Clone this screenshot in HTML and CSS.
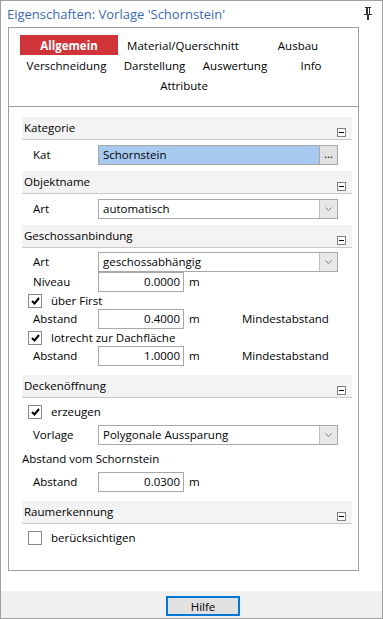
FILE: index.html
```html
<!DOCTYPE html>
<html lang="de">
<head>
    <meta charset="UTF-8">
    <title>Eigenschaften: Vorlage 'Schornstein'</title>
    <link rel="stylesheet" href="styles.css">
</head>
<body>
    <div class="window">
        <div class="titlebar">
            <span class="title">Eigenschaften: Vorlage 'Schornstein'</span>
            <svg class="pin" width="8" height="14" viewBox="0 0 8 14">
                <rect x="1" y="1" width="6" height="1" fill="#333"/>
                <rect x="2" y="2" width="1" height="6" fill="#333"/>
                <rect x="5" y="2" width="1" height="6" fill="#333"/>
                <rect x="3" y="2" width="1" height="6" fill="#333"/>
                <rect x="0" y="8" width="8" height="1" fill="#333"/>
                <rect x="3" y="9" width="2" height="5" fill="#333"/>
            </svg>
        </div>

        <div class="panel">
            <!-- Register -->
            <div class="tabs">
                <div class="tab-row">
                    <span class="tab active w98">Allgemein</span>
                    <span class="tab w130">Material/Querschnitt</span>
                    <span class="tab w100">Ausbau</span>
                </div>
                <div class="tab-row">
                    <span class="tab w93">Verschneidung</span>
                    <span class="tab w83">Darstellung</span>
                    <span class="tab w78">Auswertung</span>
                    <span class="tab w74">Info</span>
                </div>
                <div class="tab-row">
                    <span class="tab wfull">Attribute</span>
                </div>
            </div>

            <div class="content">
                <div class="section">
                    <div class="sec-head">Kategorie <span class="collapse"></span></div>
                    <div class="sec-body">
                        <div class="row">
                            <span class="lbl">Kat</span>
                            <div class="field picker">
                                <span class="value">Schornstein</span>
                                <span class="dots">...</span>
                            </div>
                        </div>
                    </div>
                </div>

                <div class="section">
                    <div class="sec-head">Objektname <span class="collapse"></span></div>
                    <div class="sec-body">
                        <div class="row">
                            <span class="lbl">Art</span>
                            <div class="field combo">
                                <span class="value">automatisch</span>
                                <span class="arrow"><svg width="7" height="4" viewBox="0 0 7 4"><polyline points="0.5,0.5 3.5,3.5 6.5,0.5" fill="none" stroke="#777" stroke-width="1"/></svg></span>
                            </div>
                        </div>
                    </div>
                </div>

                <div class="section">
                    <div class="sec-head">Geschossanbindung <span class="collapse"></span></div>
                    <div class="sec-body geschoss">
                        <div class="row">
                            <span class="lbl">Art</span>
                            <div class="field combo">
                                <span class="value">geschossabhängig</span>
                                <span class="arrow"><svg width="7" height="4" viewBox="0 0 7 4"><polyline points="0.5,0.5 3.5,3.5 6.5,0.5" fill="none" stroke="#777" stroke-width="1"/></svg></span>
                            </div>
                        </div>
                        <div class="row">
                            <span class="lbl">Niveau</span>
                            <div class="field num">0.0000</div>
                            <span class="unit">m</span>
                        </div>
                        <div class="check-row">
                            <span class="box checked"><svg width="9" height="8" viewBox="0 0 9 8"><polyline points="1,4 3.5,6.5 8,1" fill="none" stroke="#000" stroke-width="2"/></svg></span>
                            <span>über First</span>
                        </div>
                        <div class="row">
                            <span class="lbl">Abstand</span>
                            <div class="field num">0.4000</div>
                            <span class="unit">m</span>
                            <span class="note">Mindestabstand</span>
                        </div>
                        <div class="check-row">
                            <span class="box checked"><svg width="9" height="8" viewBox="0 0 9 8"><polyline points="1,4 3.5,6.5 8,1" fill="none" stroke="#000" stroke-width="2"/></svg></span>
                            <span>lotrecht zur Dachfläche</span>
                        </div>
                        <div class="row">
                            <span class="lbl">Abstand</span>
                            <div class="field num">1.0000</div>
                            <span class="unit">m</span>
                            <span class="note">Mindestabstand</span>
                        </div>
                    </div>
                </div>

                <div class="section">
                    <div class="sec-head">Deckenöffnung <span class="collapse"></span></div>
                    <div class="sec-body decke">
                        <div class="check-row">
                            <span class="box checked"><svg width="9" height="8" viewBox="0 0 9 8"><polyline points="1,4 3.5,6.5 8,1" fill="none" stroke="#000" stroke-width="2"/></svg></span>
                            <span>erzeugen</span>
                        </div>
                        <div class="row gap5">
                            <span class="lbl">Vorlage</span>
                            <div class="field combo">
                                <span class="value">Polygonale Aussparung</span>
                                <span class="arrow"><svg width="7" height="4" viewBox="0 0 7 4"><polyline points="0.5,0.5 3.5,3.5 6.5,0.5" fill="none" stroke="#777" stroke-width="1"/></svg></span>
                            </div>
                        </div>
                        <div class="sub-title">Abstand vom Schornstein</div>
                        <div class="row gap3">
                            <span class="lbl">Abstand</span>
                            <div class="field num">0.0300</div>
                            <span class="unit">m</span>
                        </div>
                    </div>
                </div>

                <div class="section">
                    <div class="sec-head">Raumerkennung <span class="collapse"></span></div>
                    <div class="sec-body">
                        <div class="check-row">
                            <span class="box"></span>
                            <span>berücksichtigen</span>
                        </div>
                    </div>
                </div>
            </div>
        </div>

        <div class="footer">
            <button class="btn-help">Hilfe</button>
        </div>
    </div>
</body>
</html>
```

FILE: styles.css
```css
/* Grundlayout */
* {
    box-sizing: border-box;
}

body {
    margin: 0;
    font-family: "Open Sans", "Noto Sans", Arial, sans-serif;
    font-size: 11.5px;
    color: #000;
    background: #fff;
}

.window {
    width: 383px;
    height: 619px;
    border: 1px solid #a0a0a0;
    background: #fff;
}

/* Titelzeile */
.titlebar {
    height: 26px;
    display: flex;
    align-items: center;
    padding-left: 6px;
}

.title {
    color: #3c6bb0;
    font-size: 13px;
    flex: 1;
    margin-top: -1px;
}

.pin {
    margin-right: 10px;
    margin-top: -2px;
}

/* Hauptbereich */
.panel {
    margin-left: 7px;
    width: 351px;
    height: 544px;
    border: 1px solid #a0a0a0;
}

/* Register */
.tabs {
    padding: 7px 0 11px 11px;
    border-bottom: 1px solid #a0a0a0;
}

.tab-row {
    display: flex;
    height: 20px;
}

.tab {
    display: flex;
    align-items: center;
    justify-content: center;
    height: 20px;
    white-space: nowrap;
}

.tab.active {
    background: #d13438;
    color: #fff;
    font-weight: bold;
}

.w98 { width: 98px; }
.w130 { width: 130px; }
.w100 { width: 100px; }
.w93 { width: 93px; }
.w83 { width: 83px; }
.w78 { width: 78px; }
.w74 { width: 74px; }
.wfull { width: 328px; }

/* Abschnitte */
.content {
    padding: 10px 6px 0 13px;
}

.sec-head {
    position: relative;
    height: 23px;
    background: #f3f3f3;
    border-bottom: 1px solid #c8c8c8;
    padding: 3px 0 0 2px;
}

.collapse {
    position: absolute;
    right: 6px;
    bottom: 2px;
    width: 9px;
    height: 9px;
    border: 1px solid #808080;
    background: #fff;
}

.collapse::after {
    content: "";
    position: absolute;
    left: 1px;
    top: 3px;
    width: 5px;
    height: 1px;
    background: #000;
}

.sec-body {
    padding: 5px 0 6px 11px;
}

.sec-body.geschoss {
    padding-top: 4px;
    padding-bottom: 9px;
}

.sec-body.decke {
    padding-bottom: 9px;
}

.row {
    display: flex;
    align-items: center;
    height: 20px;
    line-height: 18px;
}

.row.gap5 { margin-top: 5px; }
.row.gap3 { margin-top: 3px; }

.lbl {
    width: 65px;
    margin-top: -1px;
}

.field {
    height: 20px;
    border: 1px solid #a8a8a8;
    display: flex;
    align-items: center;
    background: #fff;
}

.field .value {
    flex: 1;
    padding-left: 4px;
    white-space: nowrap;
}

.picker {
    width: 240px;
}

.picker .value {
    background: #a8c9ef;
    height: 100%;
    display: flex;
    align-items: center;
}

.dots {
    width: 18px;
    height: 100%;
    border-left: 1px solid #a8a8a8;
    background: #e1e1e1;
    text-align: center;
    line-height: 16px;
}

.combo {
    width: 240px;
}

.arrow {
    width: 18px;
    height: 100%;
    border-left: 1px solid #c0c0c0;
    background: #e8e8e8;
    display: flex;
    align-items: center;
    justify-content: center;
}

.num {
    width: 86px;
    justify-content: flex-end;
    padding-right: 3px;
}

.unit {
    margin-left: 5px;
    width: 53px;
}

.check-row {
    display: flex;
    align-items: center;
    height: 17px;
    margin-left: -5px;
}

.box {
    width: 14px;
    height: 14px;
    border: 1px solid #8a8a8a;
    margin-right: 9px;
    display: flex;
    align-items: center;
    justify-content: center;
    background: #fff;
}

.sub-title {
    height: 20px;
    line-height: 20px;
    margin: 4px 0 0 -11px;
}

/* Fußzeile */
.footer {
    margin-top: 20px;
    height: 27px;
    background: #f0f0f0;
    padding: 5px 0 0 165px;
}

.btn-help {
    width: 74px;
    height: 20px;
    border: 2px solid #0078d7;
    background: #e1e1e1;
    font-family: inherit;
    font-size: 11.5px;
    padding: 0;
    color: #000;
}
```
